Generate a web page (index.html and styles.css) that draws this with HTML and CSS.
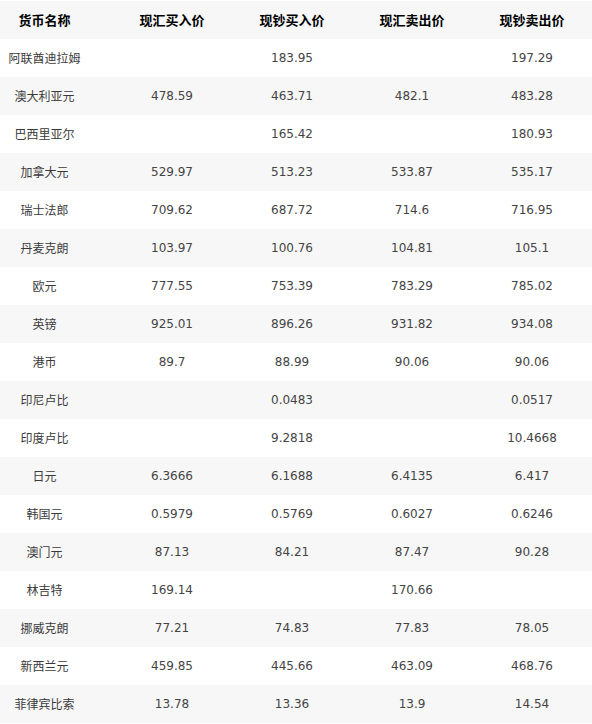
FILE: index.html
```html
<!DOCTYPE html>
<html lang="zh-CN">
<head>
<meta charset="utf-8">
<title>外汇牌价</title>
<link rel="stylesheet" href="styles.css">
</head>
<body>
<table class="rates">
  <colgroup>
    <col class="c-name"><col class="c-num"><col class="c-num"><col class="c-num"><col class="c-num">
  </colgroup>
  <thead>
    <tr><th class="name">货币名称</th><th>现汇买入价</th><th>现钞买入价</th><th>现汇卖出价</th><th>现钞卖出价</th></tr>
  </thead>
  <tbody>
    <tr><td class="name">阿联酋迪拉姆</td><td></td><td>183.95</td><td></td><td>197.29</td></tr>
    <tr><td class="name">澳大利亚元</td><td>478.59</td><td>463.71</td><td>482.1</td><td>483.28</td></tr>
    <tr><td class="name">巴西里亚尔</td><td></td><td>165.42</td><td></td><td>180.93</td></tr>
    <tr><td class="name">加拿大元</td><td>529.97</td><td>513.23</td><td>533.87</td><td>535.17</td></tr>
    <tr><td class="name">瑞士法郎</td><td>709.62</td><td>687.72</td><td>714.6</td><td>716.95</td></tr>
    <tr><td class="name">丹麦克朗</td><td>103.97</td><td>100.76</td><td>104.81</td><td>105.1</td></tr>
    <tr><td class="name">欧元</td><td>777.55</td><td>753.39</td><td>783.29</td><td>785.02</td></tr>
    <tr><td class="name">英镑</td><td>925.01</td><td>896.26</td><td>931.82</td><td>934.08</td></tr>
    <tr><td class="name">港币</td><td>89.7</td><td>88.99</td><td>90.06</td><td>90.06</td></tr>
    <tr><td class="name">印尼卢比</td><td></td><td>0.0483</td><td></td><td>0.0517</td></tr>
    <tr><td class="name">印度卢比</td><td></td><td>9.2818</td><td></td><td>10.4668</td></tr>
    <tr><td class="name">日元</td><td>6.3666</td><td>6.1688</td><td>6.4135</td><td>6.417</td></tr>
    <tr><td class="name">韩国元</td><td>0.5979</td><td>0.5769</td><td>0.6027</td><td>0.6246</td></tr>
    <tr><td class="name">澳门元</td><td>87.13</td><td>84.21</td><td>87.47</td><td>90.28</td></tr>
    <tr><td class="name">林吉特</td><td>169.14</td><td></td><td>170.66</td><td></td></tr>
    <tr><td class="name">挪威克朗</td><td>77.21</td><td>74.83</td><td>77.83</td><td>78.05</td></tr>
    <tr><td class="name">新西兰元</td><td>459.85</td><td>445.66</td><td>463.09</td><td>468.76</td></tr>
    <tr><td class="name">菲律宾比索</td><td>13.78</td><td>13.36</td><td>13.9</td><td>14.54</td></tr>
  </tbody>
</table>
</body>
</html>
```
FILE: styles.css
```css
html, body {
  margin: 0;
  padding: 0;
  background: #fff;
}
body {
  padding-top: 1px;
  font-family: "DejaVu Sans", "Noto Sans CJK SC", sans-serif;
  font-size: 12px;
  color: #444;
}
.rates {
  width: 592px;
  border-collapse: collapse;
  table-layout: fixed;
}
.c-name { width: 112px; }
.c-num { width: 120px; }
.rates tr {
  height: 38px;
}
.rates th,
.rates td {
  padding: 0;
  text-align: center;
  vertical-align: middle;
  white-space: nowrap;
}
.rates th {
  font-family: "Noto Sans CJK SC", sans-serif;
  font-size: 13px;
  font-weight: 700;
  color: #000;
  padding-bottom: 1px;
}
.rates td.name {
  font-family: "Noto Sans CJK SC", sans-serif;
  color: #3a3a3a;
  padding-bottom: 1px;
}
.rates .name {
  padding-right: 23px;
}
.rates thead tr,
.rates tbody tr:nth-child(even) {
  background: #f7f7f7;
}
```
